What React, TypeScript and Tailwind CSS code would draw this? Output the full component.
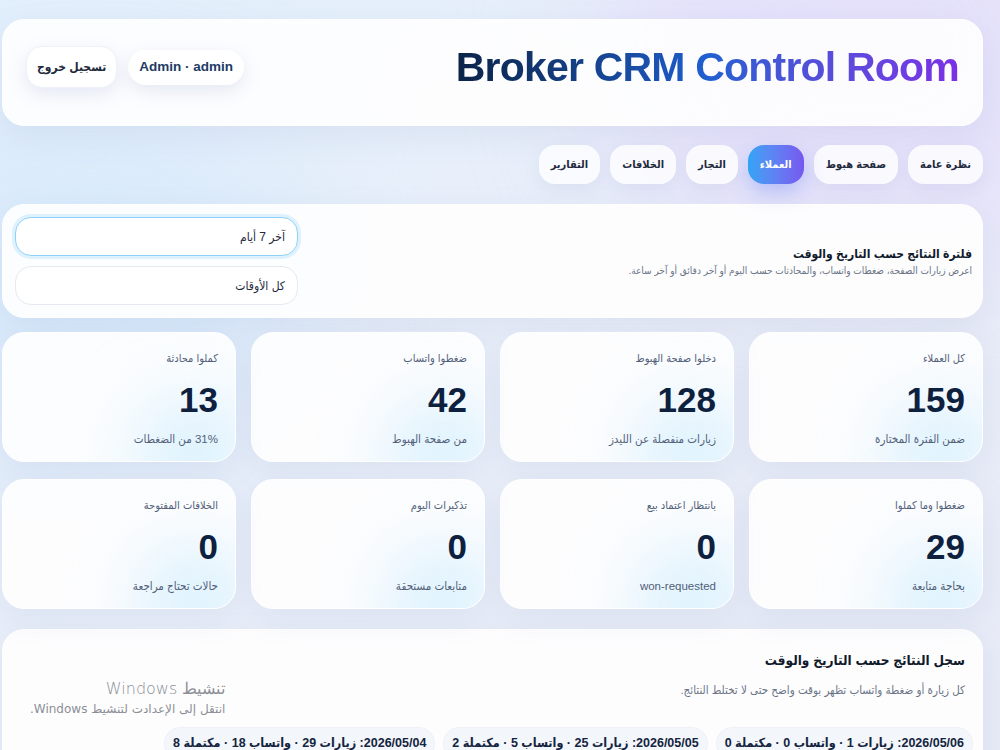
import React from "react";

const tabs = [
  { id: "overview", label: "نظرة عامة" },
  { id: "landing", label: "صفحة هبوط" },
  { id: "clients", label: "العملاء", active: true },
  { id: "merchants", label: "التجار" },
  { id: "disputes", label: "الخلافات" },
  { id: "reports", label: "التقارير" },
];

const stats = [
  { label: "كل العملاء", value: "159", note: "ضمن الفترة المختارة" },
  { label: "دخلوا صفحة الهبوط", value: "128", note: "زيارات منفصلة عن الليدز" },
  { label: "ضغطوا واتساب", value: "42", note: "من صفحة الهبوط" },
  { label: "كملوا محادثة", value: "13", note: "31% من الضغطات" },
  { label: "ضغطوا وما كملوا", value: "29", note: "بحاجة متابعة" },
  { label: "بانتظار اعتماد بيع", value: "0", note: "won-requested" },
  { label: "تذكيرات اليوم", value: "0", note: "متابعات مستحقة" },
  { label: "الخلافات المفتوحة", value: "0", note: "حالات تحتاج مراجعة" },
];

const history = [
  "2026/05/06: زيارات 1 · واتساب 0 · مكتملة 0",
  "2026/05/05: زيارات 25 · واتساب 5 · مكتملة 2",
  "2026/05/04: زيارات 29 · واتساب 18 · مكتملة 8",
];

const card =
  "bg-white/90 rounded-[22px] shadow-[0_10px_30px_rgba(120,140,190,0.12)] border border-white";

function StatCard({ label, value, note }: { label: string; value: string; note: string }) {
  return (
    <div className={`${card} relative overflow-hidden h-[130px] px-[17px] pt-[17px]`}>
      {/* soft glow in the corner */}
      <div className="absolute right-[-10px] bottom-[-45px] w-[100px] h-[100px] rounded-full bg-sky-200/70 blur-2xl" />
      <div className="relative flex flex-col items-start">
        <div className="text-[11px] leading-[16px] text-[#526079]">{label}</div>
        <div className="mt-[16px] text-[35px] leading-[36px] font-bold text-[#0d213f]">{value}</div>
        <div className="mt-[13px] text-[11.5px] leading-[16px] text-[#526079]">{note}</div>
      </div>
    </div>
  );
}

export default function App() {
  return (
    <div
      dir="rtl"
      className="relative min-h-[750px] overflow-hidden bg-gradient-to-br from-[#e2effc] via-[#eaeff9] to-[#e7eaf6] pl-[2px] pr-[17px] pt-[19px] pb-10 font-['Liberation_Sans','DejaVu_Sans_Condensed','DejaVu_Sans',sans-serif]"
    >
      <div className="pointer-events-none absolute -top-40 right-[-120px] w-[520px] h-[420px] rounded-full bg-[#e3dcfb]/70 blur-3xl" />
      <div className="pointer-events-none absolute top-[120px] left-[-120px] w-[420px] h-[320px] rounded-full bg-[#d4e8fb]/70 blur-3xl" />

      <div className="relative">
        {/* Header */}
        <header className={`${card} h-[107px] flex items-center justify-between pr-[23px] pl-[23px] pb-[11px]`}>
          <h1
            dir="ltr"
            className="text-[41px] leading-none font-bold tracking-[-0.8px] bg-gradient-to-r from-[#0b2347] via-[#1f5fd0] to-[#7a2fe6] bg-clip-text text-transparent"
          >
            Broker CRM Control Room
          </h1>
          <div className="flex items-center gap-[11px]">
            <div
              dir="ltr"
              className="h-[35px] px-[11px] flex items-center rounded-full bg-white shadow-[0_6px_18px_rgba(120,140,190,0.18)] text-[13.5px] font-bold text-[#1e3a66]"
            >
              Admin · admin
            </div>
            <button className="h-[42px] px-[10px] whitespace-nowrap flex items-center justify-center rounded-2xl bg-white border border-[#eef1f7] shadow-[0_6px_18px_rgba(120,140,190,0.18)] text-[12px] font-bold text-[#1f2a3d]">
              تسجيل خروج
            </button>
          </div>
        </header>

        {/* Tabs */}
        <nav className="mt-[19px] flex items-center gap-[10px]">
          {tabs.map((t) => (
            <button
              key={t.id}
              className={
                t.active
                  ? "h-[39px] px-[12px] whitespace-nowrap rounded-2xl bg-gradient-to-r from-[#2fa4f6] to-[#7557ef] text-white text-[11px] font-bold shadow-[0_8px_20px_rgba(90,120,240,0.35)]"
                  : "h-[39px] px-[12px] whitespace-nowrap rounded-2xl bg-white/80 text-[#1f2a3d] text-[11px] font-bold shadow-[0_6px_16px_rgba(120,140,190,0.12)]"
              }
            >
              {t.label}
            </button>
          ))}
        </nav>

        {/* Date filter */}
        <section className={`${card} mt-[20px] h-[114px] flex items-center justify-between pr-[10px] pl-[12px]`}>
          <div>
            <h2 className="text-[12px] leading-[18px] font-bold text-[#111a2b]">فلترة النتائج حسب التاريخ والوقت</h2>
            <p className="text-[10px] leading-[15px] text-[#6a7486]">
              اعرض زيارات الصفحة، ضغطات واتساب، والمحادثات حسب اليوم أو آخر دقائق أو آخر ساعة.
            </p>
          </div>
          <div className="w-[283px] flex flex-col gap-[10px]">
            <div className="h-[39px] rounded-2xl bg-white border border-[#8fd3fb] shadow-[0_0_0_3px_rgba(186,226,252,0.45)] flex items-center px-[12px] text-[12px] text-[#1f2a3d]">
              آخر 7 أيام
            </div>
            <div className="h-[39px] rounded-2xl bg-white border border-[#e6e9f1] flex items-center px-[12px] text-[12px] text-[#1f2a3d]">
              كل الأوقات
            </div>
          </div>
        </section>

        {/* Stats */}
        <div className="mt-[14px] grid grid-cols-4 gap-x-[15px] gap-y-[17px]">
          {stats.map((s) => (
            <StatCard key={s.label} {...s} />
          ))}
        </div>

        {/* History */}
        <section className={`${card} mt-[20px] pr-[17px] pl-[12px] pt-[20px] pb-6`}>
          <h2 className="text-[13.5px] leading-[22px] font-bold text-[#111a2b]">سجل النتائج حسب التاريخ والوقت</h2>
          <p className="mt-[9px] text-[11.5px] leading-[18px] text-[#6a7486]">
            كل زيارة أو ضغطة واتساب تظهر بوقت واضح حتى لا تختلط النتائج.
          </p>
          <div className="mt-[28px] mr-[-8px] flex gap-[8px]">
            {history.map((h) => (
              <div
                key={h}
                className="rounded-2xl bg-[#f3f6fb] border border-[#eef1f7] px-[8px] py-[6px] text-[12.5px] font-bold text-[#142440] whitespace-nowrap"
              >
                {h}
              </div>
            ))}
          </div>
        </section>
      </div>

      {/* Windows activation notice */}
      <div className="pointer-events-none absolute left-[30px] top-[678px] text-[#8c8f96]">
        <div className="text-[16px] leading-[22px] font-['DejaVu_Sans',sans-serif] font-light">تنشيط Windows</div>
        <div className="text-[12px] leading-[18px] font-['DejaVu_Sans',sans-serif]">انتقل إلى الإعدادت لتنشيط Windows.</div>
      </div>
    </div>
  );
}
